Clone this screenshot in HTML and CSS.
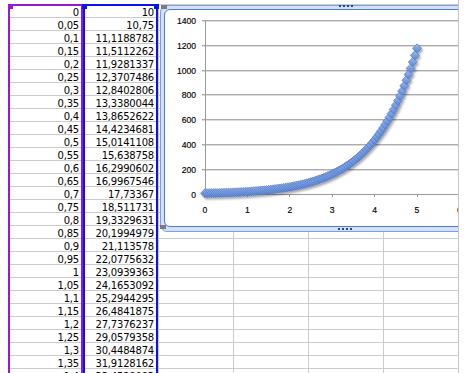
FILE: index.html
```html
<!DOCTYPE html>
<html lang="fr">
<head>
    <meta charset="UTF-8">
    <meta name="viewport" content="width=device-width, initial-scale=1.0">
    <title>Feuille1</title>
    <link rel="stylesheet" href="styles.css">
</head>
<body>

<div class="fenetre">

    <div class="feuille">
        <div class="cellule">0</div><div class="cellule">10</div>
        <div class="cellule">0,05</div><div class="cellule">10,75</div>
        <div class="cellule">0,1</div><div class="cellule">11,1188782</div>
        <div class="cellule">0,15</div><div class="cellule">11,5112262</div>
        <div class="cellule">0,2</div><div class="cellule">11,9281337</div>
        <div class="cellule">0,25</div><div class="cellule">12,3707486</div>
        <div class="cellule">0,3</div><div class="cellule">12,8402806</div>
        <div class="cellule">0,35</div><div class="cellule">13,3380044</div>
        <div class="cellule">0,4</div><div class="cellule">13,8652622</div>
        <div class="cellule">0,45</div><div class="cellule">14,4234681</div>
        <div class="cellule">0,5</div><div class="cellule">15,0141108</div>
        <div class="cellule">0,55</div><div class="cellule">15,638758</div>
        <div class="cellule">0,6</div><div class="cellule">16,2990602</div>
        <div class="cellule">0,65</div><div class="cellule">16,9967546</div>
        <div class="cellule">0,7</div><div class="cellule">17,73367</div>
        <div class="cellule">0,75</div><div class="cellule">18,511731</div>
        <div class="cellule">0,8</div><div class="cellule">19,3329631</div>
        <div class="cellule">0,85</div><div class="cellule">20,1994979</div>
        <div class="cellule">0,9</div><div class="cellule">21,113578</div>
        <div class="cellule">0,95</div><div class="cellule">22,0775632</div>
        <div class="cellule">1</div><div class="cellule">23,0939363</div>
        <div class="cellule">1,05</div><div class="cellule">24,1653092</div>
        <div class="cellule">1,1</div><div class="cellule">25,2944295</div>
        <div class="cellule">1,15</div><div class="cellule">26,4841875</div>
        <div class="cellule">1,2</div><div class="cellule">27,7376237</div>
        <div class="cellule">1,25</div><div class="cellule">29,0579358</div>
        <div class="cellule">1,3</div><div class="cellule">30,4484874</div>
        <div class="cellule">1,35</div><div class="cellule">31,9128162</div>
        <div class="cellule">1,4</div><div class="cellule">33,4528093</div>
    </div>

    <!-- plages de données sélectionnées -->
    <div class="plage plage-x"></div>
    <div class="plage plage-y"></div>
    <span class="poignee poignee-x"></span>
    <span class="poignee poignee-y1"></span>
    <span class="poignee poignee-y2"></span>

    <div class="graphique">
        <span class="coin coin-haut"></span>
        <span class="coin coin-bas"></span>
        <span class="prise prise-haut"></span>
        <span class="prise prise-bas"></span>

        <div class="zone">
            <svg width="360" height="216">
                <defs>
                    <linearGradient id="bleu" x1="0" y1="0" x2="0" y2="1">
                        <stop offset="0" stop-color="#9dbbee"/>
                        <stop offset="1" stop-color="#5a84d3"/>
                    </linearGradient>
                    <filter id="ombre" x="-10%" y="-10%" width="130%" height="130%">
                        <feDropShadow dx="1.5" dy="2" stdDeviation="1.2" flood-color="#000" flood-opacity="0.35"/>
                    </filter>
                </defs>
                <g transform="translate(-165 -10)">
                    <line class="grille" x1="202" x2="540" y1="20.5" y2="20.5"/>
                    <line class="grille" x1="202" x2="540" y1="45.5" y2="45.5"/>
                    <line class="grille" x1="202" x2="540" y1="70.5" y2="70.5"/>
                    <line class="grille" x1="202" x2="540" y1="94.5" y2="94.5"/>
                    <line class="grille" x1="202" x2="540" y1="119.5" y2="119.5"/>
                    <line class="grille" x1="202" x2="540" y1="144.5" y2="144.5"/>
                    <line class="grille" x1="202" x2="540" y1="169.5" y2="169.5"/>
                    <line class="grille-clair" x1="202" x2="540" y1="21.5" y2="21.5"/>
                    <line class="grille-clair" x1="202" x2="540" y1="46.5" y2="46.5"/>
                    <line class="grille-clair" x1="202" x2="540" y1="71.5" y2="71.5"/>
                    <line class="grille-clair" x1="202" x2="540" y1="95.5" y2="95.5"/>
                    <line class="grille-clair" x1="202" x2="540" y1="120.5" y2="120.5"/>
                    <line class="grille-clair" x1="202" x2="540" y1="145.5" y2="145.5"/>
                    <line class="grille-clair" x1="202" x2="540" y1="170.5" y2="170.5"/>

                    <line class="axe" x1="205.5" x2="205.5" y1="20" y2="197"/>
                    <line class="axe" x1="202" x2="540" y1="194.5" y2="194.5"/>
                    <line class="axe" x1="247.5" x2="247.5" y1="194" y2="197"/>
                    <line class="axe" x1="289.5" x2="289.5" y1="194" y2="197"/>
                    <line class="axe" x1="332.5" x2="332.5" y1="194" y2="197"/>
                    <line class="axe" x1="374.5" x2="374.5" y1="194" y2="197"/>
                    <line class="axe" x1="417.5" x2="417.5" y1="194" y2="197"/>
                    <line class="axe" x1="459.5" x2="459.5" y1="194" y2="197"/>

                    <text class="etiquette" x="196" y="24" text-anchor="end">1400</text>
                    <text class="etiquette" x="196" y="49" text-anchor="end">1200</text>
                    <text class="etiquette" x="196" y="74" text-anchor="end">1000</text>
                    <text class="etiquette" x="196" y="98" text-anchor="end">800</text>
                    <text class="etiquette" x="196" y="123" text-anchor="end">600</text>
                    <text class="etiquette" x="196" y="148" text-anchor="end">400</text>
                    <text class="etiquette" x="196" y="173" text-anchor="end">200</text>
                    <text class="etiquette" x="196" y="198" text-anchor="end">0</text>

                    <text class="etiquette" x="205" y="213" text-anchor="middle">0</text>
                    <text class="etiquette" x="247.4" y="213" text-anchor="middle">1</text>
                    <text class="etiquette" x="289.8" y="213" text-anchor="middle">2</text>
                    <text class="etiquette" x="332.2" y="213" text-anchor="middle">3</text>
                    <text class="etiquette" x="374.6" y="213" text-anchor="middle">4</text>
                    <text class="etiquette" x="417" y="213" text-anchor="middle">5</text>
                    <text class="etiquette" x="459.4" y="213" text-anchor="middle">6</text>

                    <g id="serie" filter="url(#ombre)"></g>
                </g>
            </svg>
        </div>
    </div>

</div>

<script src="script.js"></script>
</body>
</html>
```

FILE: styles.css
```css
body { margin: 0; background: #fff; font-family: "DejaVu Sans", Verdana, sans-serif; color: #000; }

.fenetre { position: relative; width: 458px; height: 373px; overflow: hidden; border-right: 1px solid #c6c6c6; }

/* grille de la feuille : une ligne tous les 13px, une colonne tous les 75px */
.feuille { display: grid; grid-template-columns: 75px 75px; grid-auto-rows: 13px; width: 451px; margin: 4px 0 0 8px;
    background-image: linear-gradient(to right, #cccccc 1px, transparent 1px), linear-gradient(to bottom, #cccccc 1px, transparent 1px);
    background-size: 75px 13px; font-size: 10px; letter-spacing: -0.2px; }
.cellule { text-align: right; padding: 3px 4px 0 0; line-height: 11px; white-space: nowrap; }

.plage { position: absolute; top: 4px; width: 75px; height: 400px; box-sizing: border-box; border: 2px solid; }
.plage-x { left: 8px; border-color: #9c16d8; }
.plage-y { left: 83px; border-color: #0b12f2; }
.poignee { position: absolute; top: 4px; width: 5px; height: 5px; }
.poignee-x { left: 8px; background: #9c16d8; }
.poignee-y1 { left: 82px; background: #0b12f2; }
.poignee-y2 { left: 154px; background: #0b12f2; }

/* graphique sélectionné, coupé par le bord de la fenêtre */
.graphique { position: absolute; left: 160px; top: 5px; width: 370px; height: 227px; box-sizing: border-box;
    padding: 3px 3px 4px 3px; border: 1px solid #7d9ee0; border-radius: 7px; background: #d3e0f6; }
.zone { height: 100%; box-sizing: border-box; border: 1px solid #4d7bd9; border-radius: 6px; background: #fff; overflow: hidden; }
.zone svg { display: block; }

.coin { position: absolute; width: 6px; height: 4px; background-image: radial-gradient(#7a7a7a 0.8px, transparent 1px); background-size: 2px 2px; }
.coin-haut { left: 0; top: -1px; }
.coin-bas { left: -1px; top: 219px; }
.prise { position: absolute; width: 14px; height: 2px; background: repeating-linear-gradient(to right, #24439c 0 2px, transparent 2px 4px); }
.prise-haut { left: 178px; top: -1px; }
.prise-bas { left: 177px; top: 222px; }

.grille { stroke: #ababab; stroke-width: 1; }
.grille-clair { stroke: #dcdcdc; stroke-width: 1; }
.axe { stroke: #9a9a9a; stroke-width: 1; }
.etiquette { font-family: "Liberation Sans", Arial, sans-serif; font-size: 8.6px; fill: #000; stroke: #000; stroke-width: 0.15px; }
#serie path { fill: url(#bleu); stroke: #5277c4; stroke-width: 0.7; }
```

FILE: script.js
```js
// série : x de 0 à 5 par pas de 0,05
var serie = document.getElementById("serie");
var ns = "http://www.w3.org/2000/svg";

function valeur(x) {
    var xc = 0.936;
    var l;
    if (x <= xc) {
        l = 0.648 * x + 0.18 * x * x;
    } else {
        l = 0.648 * xc + 0.18 * xc * xc + 0.985 * (x - xc);
    }
    return 10 * Math.exp(l);
}

for (var i = 0; i <= 100; i++) {
    var x = i * 0.05;
    var px = 205 + x * 42.4;
    var py = 194.5 - valeur(x) * 174 / 1400;
    var losange = document.createElementNS(ns, "path");
    losange.setAttribute("d", "M" + px.toFixed(2) + " " + (py - 4.5).toFixed(2) + "l4.5 4.5l-4.5 4.5l-4.5 -4.5z");
    serie.appendChild(losange);
}
```
